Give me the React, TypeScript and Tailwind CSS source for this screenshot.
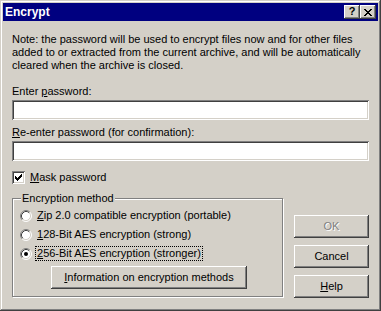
import React from 'react';

// Win2k classic bevels
const raised =
  'shadow-[inset_-1px_-1px_0_#404040,inset_1px_1px_0_#ffffff,inset_-2px_-2px_0_#808080,inset_2px_2px_0_#d4d0c8]';
const sunken =
  'shadow-[inset_1px_1px_0_#808080,inset_-1px_-1px_0_#ffffff,inset_2px_2px_0_#404040,inset_-2px_-2px_0_#d4d0c8]';

function CheckMark() {
  // 7x7 pixel tick
  const rows = ['......x', '.....xx', 'x...xxx', 'xx.xxx.', 'xxxxx..', '.xxx...', '..x....'];
  return (
    <svg width="7" height="7" viewBox="0 0 7 7" shapeRendering="crispEdges">
      {rows.map((row, y) =>
        row.split('').map((c, x) =>
          c === 'x' ? <rect key={`${x}-${y}`} x={x} y={y} width="1" height="1" fill="#000" /> : null
        )
      )}
    </svg>
  );
}

function Radio({ checked }: { checked?: boolean }) {
  return (
    <svg width="12" height="12" viewBox="0 0 12 12" className="shrink-0">
      <circle cx="6" cy="6" r="5" fill="#fff" />
      <path d="M2.11 9.89 A5.5 5.5 0 0 1 9.89 2.11" stroke="#808080" fill="none" />
      <path d="M9.89 2.11 A5.5 5.5 0 0 1 2.11 9.89" stroke="#ffffff" fill="none" />
      <path d="M2.82 9.18 A4.5 4.5 0 0 1 9.18 2.82" stroke="#404040" fill="none" />
      <path d="M9.18 2.82 A4.5 4.5 0 0 1 2.82 9.18" stroke="#d4d0c8" fill="none" />
      {checked && <circle cx="6" cy="6" r="2" fill="#000" />}
    </svg>
  );
}

function RadioRow({ children, checked, focus }: { children: React.ReactNode; checked?: boolean; focus?: boolean }) {
  return (
    <div className="flex items-center h-[15px]">
      <Radio checked={checked} />
      <span
        className={`ml-[4px] px-[1px] leading-[13px] whitespace-nowrap ${
          focus ? 'outline-1 outline-dotted outline-black' : ''
        }`}
      >
        {children}
      </span>
    </div>
  );
}

function Button({ children, disabled, className = '' }: { children: React.ReactNode; disabled?: boolean; className?: string }) {
  return (
    <div
      className={`h-[23px] flex items-center justify-center bg-[#d4d0c8] ${raised} ${
        disabled ? 'text-[#808080] [text-shadow:1px_1px_0_#ffffff]' : 'text-black'
      } ${className}`}
    >
      {children}
    </div>
  );
}

export default function App() {
  return (
    <div
      className={`w-[381px] h-[311px] bg-[#d4d0c8] p-[3px] text-black text-[11px] leading-[13px] shadow-[inset_-1px_-1px_0_#404040,inset_1px_1px_0_#d4d0c8,inset_-2px_-2px_0_#808080,inset_2px_2px_0_#ffffff] flex flex-col`}
      style={{ fontFamily: '"Liberation Sans", Arial, sans-serif' }}
    >
      {/* title bar */}
      <div className="h-[18px] bg-[#000080] flex items-center pl-[2px] pr-[2px]">
        <span className="text-white font-bold text-[12px] leading-[18px]">Encrypt</span>
        <div className="ml-auto flex">
          <div className={`w-[16px] h-[14px] bg-[#d4d0c8] ${raised} flex items-center justify-center font-bold text-[11px] leading-none pb-[1px]`}>
            ?
          </div>
          <div className={`w-[16px] h-[14px] bg-[#d4d0c8] ${raised} flex items-center justify-center`}>
            <svg width="8" height="7" viewBox="0 0 8 7" shapeRendering="crispEdges">
              <path d="M0 0h2v1h-2zM6 0h2v1h-2zM1 1h2v1h-2zM5 1h2v1h-2zM2 2h4v1h-4zM3 3h2v1h-2zM2 4h4v1h-4zM1 5h2v1h-2zM5 5h2v1h-2zM0 6h2v1h-2zM6 6h2v1h-2z" fill="#000" />
            </svg>
          </div>
        </div>
      </div>

      {/* body */}
      <div className="px-[9px] flex flex-col">
        <div className="mt-[12px] whitespace-nowrap">
          <div>Note: the password will be used to encrypt files now and for other files</div>
          <div>added to or extracted from the current archive, and will be automatically</div>
          <div>cleared when the archive is closed.</div>
        </div>

        <div className="mt-[13px]">
          Enter <u>p</u>assword:
        </div>
        <div className={`mt-[2px] h-[20px] bg-white ${sunken}`} />

        <div className="mt-[6px]">
          <u>R</u>e-enter password (for confirmation):
        </div>
        <div className={`mt-[2px] h-[20px] bg-white ${sunken}`} />

        <div className="mt-[10px] flex items-center h-[13px]">
          <div className={`w-[13px] h-[13px] bg-white ${sunken} flex items-center justify-center`}>
            <CheckMark />
          </div>
          <span className="ml-[5px]">
            <u>M</u>ask password
          </span>
        </div>

        <div className="mt-[14px] flex items-start">
          {/* group box */}
          <div className="relative w-[271px] h-[99px] border border-[#808080] shadow-[1px_1px_0_#ffffff,inset_1px_1px_0_#ffffff] pl-[7px] pt-[9px]">
            <span className="absolute left-[8px] top-[-7px] bg-[#d4d0c8] px-[1px] leading-[13px]">Encryption method</span>
            <div className="flex flex-col gap-[4px]">
              <RadioRow>
                <u>Z</u>ip 2.0 compatible encryption (portable)
              </RadioRow>
              <RadioRow>
                <u>1</u>28-Bit AES encryption (strong)
              </RadioRow>
              <RadioRow checked focus>
                <u>2</u>56-Bit AES encryption (stronger)
              </RadioRow>
            </div>
            <Button className="mt-[5px] ml-[31px] w-[196px]">
              <span>
                <u>I</u>nformation on encryption methods
              </span>
            </Button>
          </div>

          {/* buttons */}
          <div className="ml-[11px] pt-[17px] flex flex-col gap-[7px] w-[75px]">
            <Button disabled>OK</Button>
            <Button>Cancel</Button>
            <Button>
              <span>
                <u>H</u>elp
              </span>
            </Button>
          </div>
        </div>
      </div>
    </div>
  );
}
